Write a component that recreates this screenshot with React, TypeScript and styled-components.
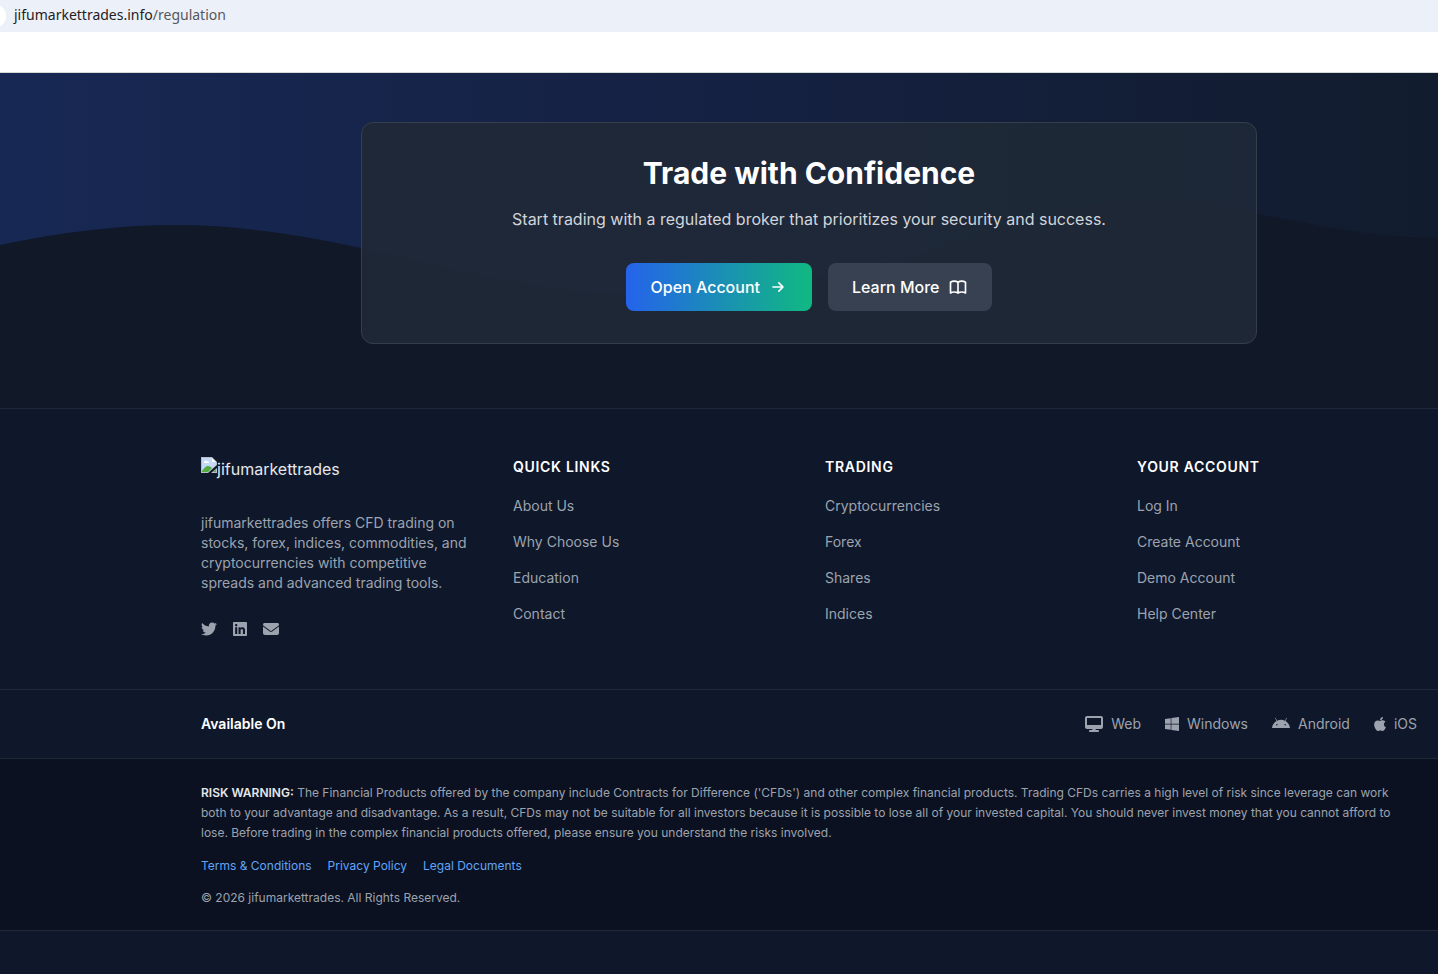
import React from "react";
import styled, { createGlobalStyle } from "styled-components";
import {
  FaTwitter,
  FaLinkedin,
  FaEnvelope,
  FaDesktop,
  FaWindows,
  FaAndroid,
  FaApple,
} from "react-icons/fa6";

const GlobalStyle = createGlobalStyle`
  * { box-sizing: border-box; }
  body {
    margin: 0;
    background: #0f172a;
    color: #e5e7eb;
    font-family: Inter, sans-serif;
    font-size: 16px;
    line-height: 24px;
  }
  h2, h3, p, ul { margin: 0; padding: 0; }
  ul { list-style: none; }
  a { color: inherit; text-decoration: none; }
`;

const AddressBar = styled.div`
  height: 32px;
  display: flex;
  align-items: center;
  background: #ecf0f9;
  overflow: hidden;
`;

const SiteInfo = styled.span`
  width: 24px;
  height: 24px;
  margin-left: -18px;
  border-radius: 50%;
  background: #fff;
`;

const Address = styled.div`
  padding: 0 8px 2px;
  color: #1f2023;
  font: 14px/20px "Noto Sans", sans-serif;

  span { color: #55585d; }
`;

const BookmarksBar = styled.div`
  height: 41px;
  background: #fff;
  border-bottom: 1px solid #d5d9d8;
`;

const Hero = styled.section`
  position: relative;
  padding: 49px 0 64px 180px;
  background: linear-gradient(90deg, #172854 0%, #152142 50%, #111c2e 100%);
`;

const Wave = styled.svg`
  position: absolute;
  inset: 0;
  width: 100%;
  height: 100%;
`;

const HeroCard = styled.div`
  position: relative;
  max-width: 896px;
  margin: 0 auto;
  padding: 32px;
  text-align: center;
  border: 1px solid #343e4d;
  border-radius: 12px;
  background: rgba(31, 41, 55, 0.9);
`;

const HeroTitle = styled.h2`
  margin-bottom: 16px;
  color: #fff;
  font-size: 30px;
  line-height: 36px;
  font-weight: 700;
`;

const HeroText = styled.p`
  margin-bottom: 32px;
  color: #d1d5db;
`;

const Actions = styled.div`
  display: flex;
  justify-content: center;
  gap: 16px;
`;

const ActionButton = styled.button<{ $primary?: boolean }>`
  display: flex;
  align-items: center;
  gap: 8px;
  padding: 12px 24px;
  border: 0;
  border-radius: 8px;
  color: #fff;
  font: 500 16px/24px Inter, sans-serif;
  background: ${(p) =>
    p.$primary ? "linear-gradient(90deg, #2563eb, #10b981)" : "#374151"};
`;

const Footer = styled.footer`
  border-top: 1px solid #1f2937;
`;

const Band = styled.div<{ $dark?: boolean; $pad: number }>`
  padding: ${(p) => p.$pad}px 0 ${(p) => p.$pad}px 180px;
  border-bottom: 1px solid #1f2937;
  background: ${(p) => (p.$dark ? "#0b1120" : "#0f172a")};
`;

const Container = styled.div`
  max-width: 1216px;
  margin: 0 auto;
`;

const Columns = styled(Container)`
  display: grid;
  grid-template-columns: repeat(4, 1fr);
  gap: 32px;
`;

const Brand = styled.a`
  display: flex;
  height: 40px;
  margin-bottom: 16px;
`;

const Blurb = styled.p`
  margin-bottom: 24px;
  color: #9ca3af;
  font-size: 14px;
  line-height: 20px;
`;

const Glyph = styled.span<{ $width: number }>`
  display: flex;

  svg { width: ${(p) => p.$width}px; height: 16px; }
`;

const Socials = styled.div`
  display: flex;
  gap: 16px;
  color: #9ca3af;

  a { height: 24px; display: flex; align-items: center; }
`;

const ColumnTitle = styled.h3`
  margin-bottom: 16px;
  color: #fff;
  font-size: 14px;
  line-height: 20px;
  font-weight: 600;
  letter-spacing: 0.7px;
  text-transform: uppercase;
`;

const LinkList = styled.ul`
  display: grid;
  gap: 12px;
  color: #9ca3af;

  li { height: 24px; }
  a { font-size: 14px; }
`;

const PlatformRow = styled(Container)`
  display: flex;
  justify-content: space-between;
  align-items: center;
  font-size: 14px;
  line-height: 20px;
`;

const PlatformTitle = styled.h3`
  color: #fff;
  font-size: 14px;
  line-height: 20px;
  font-weight: 600;
`;

const Platforms = styled.ul`
  display: flex;
  gap: 24px;
  color: #9ca3af;

  li { display: flex; align-items: center; gap: 8px; }
`;

const Legal = styled(Container)`
  color: #9ca3af;
  font-size: 12px;
  line-height: 16px;
`;

const Risk = styled.p`
  margin-bottom: 15px;
  line-height: 20px;

  strong { color: #e5e7eb; font-weight: 600; }
`;

const LegalLinks = styled.nav`
  display: flex;
  gap: 16px;
  margin-bottom: 16px;
  color: #60a5fa;
`;

const columns = [
  { title: "Quick Links", links: ["About Us", "Why Choose Us", "Education", "Contact"] },
  { title: "Trading", links: ["Cryptocurrencies", "Forex", "Shares", "Indices"] },
  { title: "Your Account", links: ["Log In", "Create Account", "Demo Account", "Help Center"] },
];

const socials = [
  { label: "Twitter", Icon: FaTwitter, width: 16 },
  { label: "LinkedIn", Icon: FaLinkedin, width: 14 },
  { label: "Email", Icon: FaEnvelope, width: 16 },
];

const platforms = [
  { label: "Web", Icon: FaDesktop, width: 18 },
  { label: "Windows", Icon: FaWindows, width: 14 },
  { label: "Android", Icon: FaAndroid, width: 18 },
  { label: "iOS", Icon: FaApple, width: 12 },
];

const OutlineIcon = ({ d }: { d: string }) => (
  <svg
    width="20"
    height="20"
    viewBox="0 0 24 24"
    fill="none"
    stroke="currentColor"
    strokeWidth="2"
    strokeLinecap="round"
    strokeLinejoin="round"
    aria-hidden="true"
  >
    <path d={d} />
  </svg>
);

const ARROW = "M13 7l5 5m0 0l-5 5m5-5H6";
const BOOK =
  "M12 6.253v13m0-13C10.832 5.477 9.246 5 7.5 5S4.168 5.477 3 6.253v13C4.168 18.477 5.754 18 7.5 18s3.332.477 4.500 1.253m0-13C13.168 5.477 14.754 5 16.500 5c1.747 0 3.332.477 4.500 1.253v13C19.832 18.477 18.247 18 16.500 18c-1.746 0-3.332.477-4.500 1.253";

const BrokenImage = () => (
  <svg width="16" height="16" viewBox="0 0 16 16" aria-hidden="true">
    <path d="M0 0h11l5 5v3L7 16H0z" fill="#b9bdc4" />
    <path d="M1 1h10v4h4v3l-8 7H1z" fill="#c4d8f8" />
    <path d="M3 6a2 2 0 013-2 2 2 0 012 2z" fill="#fff" />
    <path d="M1 15v-1c2-3 4-5 6-5 2 0 3 1 4 2l-4 4z" fill="#54ac3c" />
    <path d="M11 1l4 4h-4z" fill="#fff" />
    <path d="M16 11v5h-6z" fill="#b9bdc4" />
    <path d="M15 13v2h-3z" fill="#54ac3c" />
  </svg>
);

export default function App() {
  return (
    <>
      <GlobalStyle />
      <AddressBar>
        <SiteInfo />
        <Address>
          jifumarkettrades.info<span>/regulation</span>
        </Address>
      </AddressBar>
      <BookmarksBar />
      <main>
        <Hero>
          <Wave viewBox="0 0 1438 335" preserveAspectRatio="none" aria-hidden="true">
            <path
              fill="#111827"
              d="M0 172C60 159 120 152 175 152C240 152 300 162 361 175C450 194 540 220 625 220C740 220 830 202 911 184C1000 155 1070 127 1154 127C1190 127 1225 133 1257 141C1320 152 1370 165 1438 165V335H0Z"
            />
          </Wave>
          <HeroCard>
            <HeroTitle>Trade with Confidence</HeroTitle>
            <HeroText>
              Start trading with a regulated broker that prioritizes your security and success.
            </HeroText>
            <Actions>
              <ActionButton $primary>
                Open Account <OutlineIcon d={ARROW} />
              </ActionButton>
              <ActionButton>
                Learn More <OutlineIcon d={BOOK} />
              </ActionButton>
            </Actions>
          </HeroCard>
        </Hero>
      </main>
      <Footer>
        <Band $pad={48}>
          <Columns>
            <div>
              <Brand href="#">
                <BrokenImage />
                jifumarkettrades
              </Brand>
              <Blurb>
                jifumarkettrades offers CFD trading on stocks, forex, indices, commodities, and
                cryptocurrencies with competitive spreads and advanced trading tools.
              </Blurb>
              <Socials>
                {socials.map(({ label, Icon, width }) => (
                  <a key={label} href="#" aria-label={label}>
                    <Glyph $width={width}><Icon /></Glyph>
                  </a>
                ))}
              </Socials>
            </div>
            {columns.map((c) => (
              <div key={c.title}>
                <ColumnTitle>{c.title}</ColumnTitle>
                <LinkList>
                  {c.links.map((l) => (
                    <li key={l}><a href="#">{l}</a></li>
                  ))}
                </LinkList>
              </div>
            ))}
          </Columns>
        </Band>
        <Band $pad={24}>
          <PlatformRow>
            <PlatformTitle>Available On</PlatformTitle>
            <Platforms>
              {platforms.map(({ label, Icon, width }) => (
                <li key={label}>
                  <Glyph $width={width}><Icon /></Glyph>
                  {label}
                </li>
              ))}
            </Platforms>
          </PlatformRow>
        </Band>
        <Band $dark $pad={24}>
          <Legal>
            <Risk>
              <strong>RISK WARNING:</strong> The Financial Products offered by the company include
              Contracts for Difference ('CFDs') and other complex financial products. Trading CFDs
              carries a high level of risk since leverage can work both to your advantage and
              disadvantage. As a result, CFDs may not be suitable for all investors because it is
              possible to lose all of your invested capital. You should never invest money that you
              cannot afford to lose. Before trading in the complex financial products offered,
              please ensure you understand the risks involved.
            </Risk>
            <LegalLinks>
              <a href="#">Terms &amp; Conditions</a>
              <a href="#">Privacy Policy</a>
              <a href="#">Legal Documents</a>
            </LegalLinks>
            <p>© 2026 jifumarkettrades. All Rights Reserved.</p>
          </Legal>
        </Band>
      </Footer>
    </>
  );
}
